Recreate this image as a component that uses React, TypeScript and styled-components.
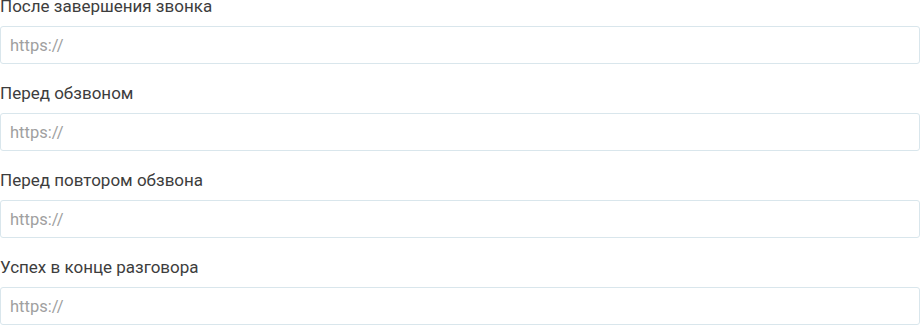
import React from "react";
import styled, { createGlobalStyle } from "styled-components";

const Global = createGlobalStyle`
  html, body { margin: 0; padding: 0; background: #fff; }
  body { font-family: Roboto, "Noto Sans", sans-serif; }
`;

const Form = styled.div`
  display: flex;
  flex-direction: column;
  gap: 23px;
  width: 920px;
`;

const Field = styled.div`
  display: flex;
  flex-direction: column;
  gap: 13px;
`;

const Label = styled.label`
  display: block;
  font-size: 17px;
  line-height: 13px;
  color: #3d3d3d;
  font-weight: 400;
`;

const Input = styled.input`
  box-sizing: border-box;
  width: 920px;
  height: 38px;
  border: 1px solid #d9e6ec;
  border-radius: 3px;
  padding: 0 9px;
  font-family: Roboto, "Noto Sans", sans-serif;
  font-size: 16.5px;
  color: #333;
  outline: none;
  &::placeholder { color: #a0a0a0; }
`;

const fields = [
  "После завершения звонка",
  "Перед обзвоном",
  "Перед повтором обзвона",
  "Успех в конце разговора",
];

export default function App() {
  return (
    <>
      <Global />
      <Form>
        {fields.map((f) => (
          <Field key={f}>
            <Label>{f}</Label>
            <Input placeholder="https://" />
          </Field>
        ))}
      </Form>
    </>
  );
}
